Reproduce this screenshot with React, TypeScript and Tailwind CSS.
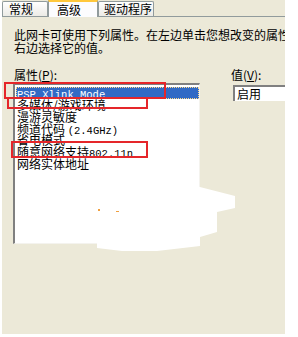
const cjk = { fontFamily: '"Noto Sans CJK SC", "Liberation Sans", sans-serif' };

function Mono({ children }: { children: React.ReactNode }) {
  return <span className="font-['Liberation_Mono',monospace] text-[10.5px] leading-none">{children}</span>;
}

const items: React.ReactNode[] = [
  <>多媒体/游戏环境</>,
  <>漫游灵敏度</>,
  <>频道代码 <Mono>(2.4GHz)</Mono></>,
  <>省电模式</>,
  <>随意网络支持<Mono>802.11n</Mono></>,
  <>网络实体地址</>,
];

export default function App() {
  return (
    <div className="relative w-[298px] h-[337px] bg-white overflow-hidden text-[12px] text-black" style={cjk}>
      <div className="ml-[2px] w-[283px] h-[334px] bg-[#ece9d8] overflow-hidden flex flex-col">
        {/* tabs */}
        <div className="flex items-end h-[17px] border-b border-[#919b9c] shrink-0">
          <div className="w-[46px] h-[15px] pl-[6px] leading-[14px] border border-b-0 border-[#919b9c] rounded-t-[2px] bg-gradient-to-b from-white to-[#ecebe6]">
            常规
          </div>
          <div className="w-[50px] h-[17px] -mb-px pl-[8px] leading-[15px] border-x border-[#919b9c] border-t-2 border-t-[#ffc83c] bg-[#fcfcfe]">
            高级
          </div>
          <div className="w-[56px] h-[15px] pl-[5px] leading-[14px] border border-b-0 border-[#919b9c] rounded-t-[2px] bg-gradient-to-b from-white to-[#ecebe6]">
            驱动程序
          </div>
        </div>

        <div className="pl-[12px] pt-[11px] leading-[13px] whitespace-nowrap">
          <p>此网卡可使用下列属性。在左边单击您想改变的属性</p>
          <p>右边选择它的值。</p>
        </div>

        <div className="flex mt-[14px]">
          <div className="ml-[11px] w-[187px] shrink-0">
            <p className="leading-[13px] pl-[1px]">
              属性(<span className="underline">P</span>):
            </p>
            <div className="mt-[2px] h-[161px] bg-white border-l-2 border-t-2 border-[#808080] border-r border-b border-r-[#f4f3ee] border-b-[#f4f3ee] pt-[2px] pl-[1px]">
              <div className="h-[12px] leading-[12px] bg-[#316ac5] text-white pl-px outline outline-1 outline-dotted outline-[#ffd98a] -outline-offset-1">
                <Mono>PSP Xlink Mode</Mono>
              </div>
              {items.map((it, i) => (
                <div key={i} className="h-[11.8px] leading-[12.5px] pl-px whitespace-nowrap">
                  {it}
                </div>
              ))}
            </div>
          </div>
          <div className="ml-[30px] shrink-0">
            <p className="leading-[13px] pl-[1px]">
              值(<span className="underline">V</span>):
            </p>
            <div className="mt-[4px] ml-[3px] h-[16px] w-[80px] bg-white border-l-2 border-t-2 border-[#808080] pl-[2px] leading-[13px]">
              启用
            </div>
          </div>
        </div>
      </div>

      {/* red annotation boxes */}
      <div className="absolute left-[4px] top-[82px] w-[162px] h-[17px] border-2 border-[#e5262a]" />
      <div className="absolute left-[7px] top-[97px] w-[141px] h-[12px] border-2 border-[#e5262a]" />
      <div className="absolute left-[11px] top-[141px] w-[137px] h-[17px] border-2 border-[#e5262a]" />

      {/* erased patch */}
      <svg className="absolute left-0 top-0" width="298" height="337">
        <polygon
          points="196,186 235,196 235,208 217,212 217,232 200,237 200,246 157,251 122,251 97,248 97,243 196,243"
          fill="#ffffff"
        />
        <rect x="98" y="209" width="2" height="2" fill="#f0a040" />
        <rect x="116" y="211" width="3" height="1" fill="#f0a040" />
      </svg>
    </div>
  );
}
